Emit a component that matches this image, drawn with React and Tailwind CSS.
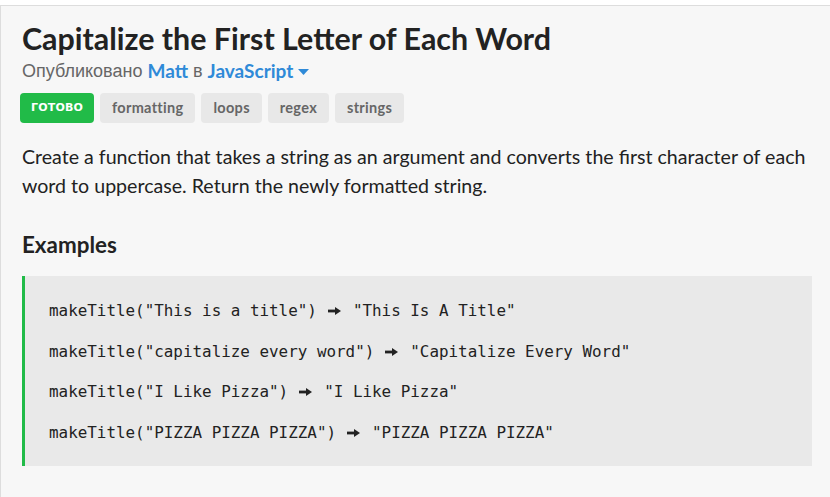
export default function App() {
  const lato = { fontFamily: "Lato, 'Liberation Sans', sans-serif" };
  const examples = [
    ['makeTitle("This is a title")', '"This Is A Title"'],
    ['makeTitle("capitalize every word")', '"Capitalize Every Word"'],
    ['makeTitle("I Like Pizza")', '"I Like Pizza"'],
    ['makeTitle("PIZZA PIZZA PIZZA")', '"PIZZA PIZZA PIZZA"'],
  ];
  const tags = ["formatting", "loops", "regex", "strings"];
  return (
    <div className="bg-white pt-[5px] w-[830px] h-[497px] overflow-hidden">
      <div
        className="border-t border-l border-[#dddddd] bg-[#f7f7f7] pl-[21px] pr-[18px] h-full"
        style={lato}
      >
        <h1 className="font-['Lato','Noto_Sans',sans-serif] font-bold text-[30.4px] leading-[36px] text-[#222222] pt-[14px]">
          Capitalize the First Letter of Each Word
        </h1>
        <div className="flex items-center text-[18px] leading-[24px] mt-[3px] text-[#666666]">
          <span className="font-['Liberation_Sans',sans-serif]">Опубликовано</span>
          <span className="font-['Lato',sans-serif] font-bold text-[#2f8ad8] ml-[5px] text-[19px]">Matt</span>
          <span className="font-['Liberation_Sans',sans-serif] ml-[5px]">в</span>
          <span className="font-['Lato',sans-serif] font-bold text-[#2f8ad8] ml-[5px] text-[19px]">JavaScript</span>
          <svg width="11" height="7" viewBox="0 0 11 7" className="ml-[5px] mt-[2px]">
            <path d="M0 0 L11 0 L5.5 6 Z" fill="#2f8ad8" />
          </svg>
        </div>
        <div className="flex gap-[6px] mt-[10px]">
          <span className="h-[30px] w-[74px] -ml-[2px] rounded-[4px] bg-[#21bb48] text-white text-[11px] font-bold flex items-center justify-center font-['DejaVu_Sans',sans-serif] tracking-[0.2px]">
            ГОТОВО
          </span>
          {tags.map((t) => (
            <span
              key={t}
              className="h-[30px] px-[12px] rounded-[4px] bg-[#e8e8e8] text-[#666666] text-[14.5px] font-bold flex items-center tracking-[0.3px]"
            >
              {t}
            </span>
          ))}
        </div>
        <p className="text-[19.6px] leading-[29px] text-[#222222] mt-[19px]">
          Create a function that takes a string as an argument and converts the first character of each
          word to uppercase. Return the newly formatted string.
        </p>
        <h2 className="text-[22.4px] font-bold text-[#222222] mt-[31px] leading-[28px]">Examples</h2>
        <div className="mt-[17px] border-l-[3px] border-[#21bb48] bg-[#e9e9e9] h-[190px] pl-[24px] pt-[23px] font-['DejaVu_Sans_Mono',monospace] text-[15.9px] text-[#222222]">
          {examples.map(([a, b], i) => (
            <div key={i} className="leading-[24px] mb-[16.5px] whitespace-pre flex items-center">
              <span>{a}</span>
              <svg width="13" height="8" viewBox="0 0 13 8" className="ml-[11px] mr-[12px] shrink-0">
                <rect x="0" y="2.6" width="8" height="2.8" fill="#222222" />
                <path d="M7 0 L13 4 L7 8 Z" fill="#222222" />
              </svg>
              <span>{b}</span>
            </div>
          ))}
        </div>
      </div>
    </div>
  );
}
